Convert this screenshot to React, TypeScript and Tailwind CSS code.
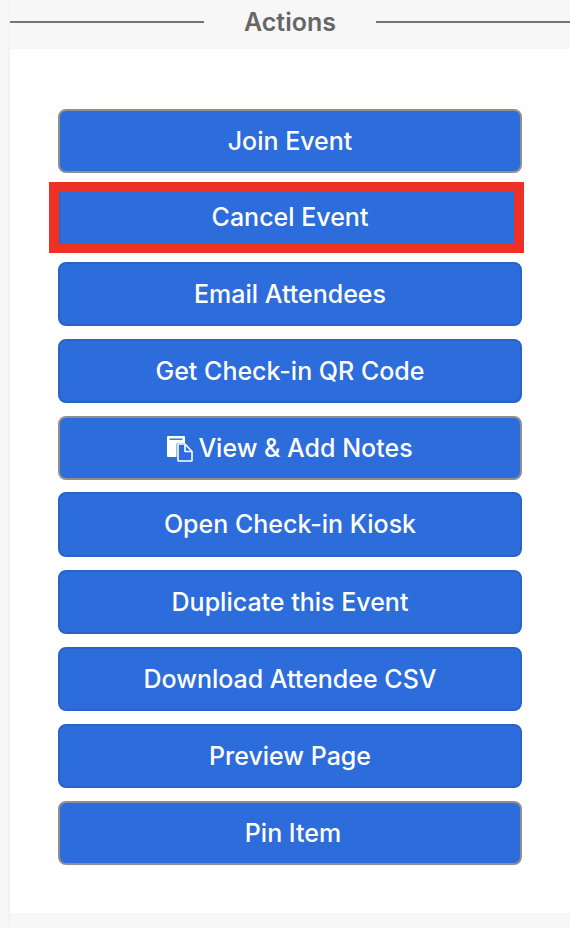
const actions = [
  { label: "Join Event", focused: true },
  { label: "Cancel Event", highlighted: true, rowClass: "h-[63px]", labelClass: "pt-0" },
  { label: "Email Attendees" },
  { label: "Get Check-in QR Code" },
  { label: "View & Add Notes", focused: true, icon: true, rowClass: "h-[64px] -mb-px" },
  { label: "Open Check-in Kiosk", rowClass: "h-[65px]", labelClass: "pt-0" },
  { label: "Duplicate this Event" },
  { label: "Download Attendee CSV" },
  { label: "Preview Page" },
  { label: "Pin Item", focused: true, labelClass: "pt-[2px] pl-[6px]" },
];

function NotesIcon() {
  return (
    <svg viewBox="0 0 26 26" className="mr-[5px] h-[26px] w-[26px] shrink-0" aria-hidden="true">
      <path
        d="M1 0h16a1 1 0 0 1 1 1v6h-7a1.500 1.500 0 0 0-1.500 1.500V21H1a1 1 0 0 1-1-1V1a1 1 0 0 1 1-1z"
        fill="#fff"
      />
      <rect x="2.500" y="2.500" width="13" height="1.400" fill="#2d6cdb" />
      <path
        d="M11.500 8H18l7 7.500V24.500a.5.5 0 0 1-.5.5h-13a.5.5 0 0 1-.5-.5V8.500a.5.5 0 0 1 .5-.5z"
        fill="#2d6cdb"
        stroke="#fff"
        strokeWidth="1.600"
        strokeLinejoin="round"
      />
      <path d="M18 8.500V15.500h6.500" fill="none" stroke="#fff" strokeWidth="1.600" strokeLinejoin="round" />
    </svg>
  );
}

export default function App() {
  return (
    <div className="h-[928px] overflow-hidden bg-[#f7f7f7] pl-[10px] font-['Inter',sans-serif]">
      <div className="h-full shadow-[-1px_0_2px_rgba(0,0,0,0.04)]">
        <header className="flex h-[49px] items-start">
          <div className="mt-[21px] h-[2px] w-[194px] bg-[#757575]" />
          <h2 className="w-[172px] pt-[4px] text-center text-[25px] leading-[36px] font-semibold text-[#666666]">
            Actions
          </h2>
          <div className="mt-[21px] h-[2px] flex-1 bg-[#757575]" />
        </header>

        <section className="flex h-[864px] flex-col gap-[13px] bg-white px-[48px] pt-[60px]">
          {actions.map((action) => (
            <div key={action.label} className={`relative ${action.rowClass ?? "h-[64px]"}`}>
              <button
                type="button"
                className={`flex h-full w-full items-center justify-center rounded-[8px] border-2 bg-[#2d6cdb] text-[25px] font-[450] text-white ${
                  action.focused ? "border-[#8f8f8f]" : "border-[#2a63c7]"
                } ${action.labelClass ?? "pt-[2px]"}`}
              >
                {action.icon && <NotesIcon />}
                {action.label}
              </button>
              {action.highlighted && (
                <div className="absolute -top-[4px] -right-[2px] -left-[9px] h-[71px] border-x-[10px] border-y-[9px] border-[#ee3124]" />
              )}
            </div>
          ))}
        </section>
      </div>
    </div>
  );
}
